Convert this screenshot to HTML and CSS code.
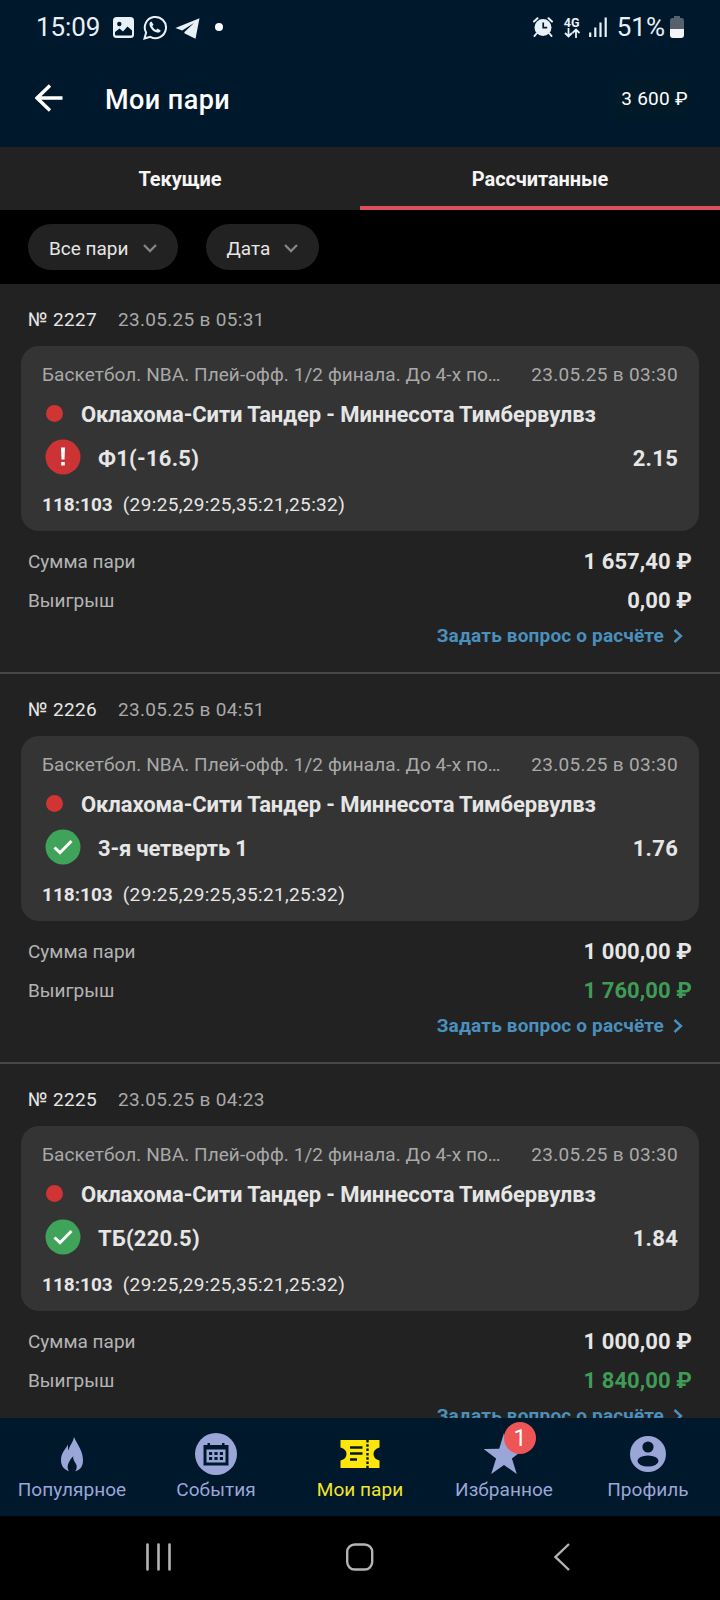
FILE: index.html
```html
<!DOCTYPE html>
<html lang="ru">
<head>
<meta charset="utf-8">
<title>Мои пари</title>
<link rel="stylesheet" href="styles.css">
</head>
<body>
<div class="app">
  <div class="statusbar">
    <span class="clock">15:09</span>
    <svg class="st-image" width="21" height="21" viewBox="0 0 21 21"><rect width="21" height="21" rx="3.5" fill="#e8f0f8"/><circle cx="6.3" cy="7" r="2.2" fill="#00182b"/><path d="M2 17.500v-2.500l4.500-3.500 3.500 3L14.500 9.500l4.500 4v4q0 1-1 1H3q-1 0-1-1z" fill="#00182b"/></svg>
    <svg class="st-whatsapp" width="24" height="25" viewBox="0 0 24 25"><path d="M1.500 23.500l1.600-5.900a10.600 10.600 0 1 1 4.200 4.200z" fill="none" stroke="#e8f0f8" stroke-width="2"/><path d="M8.500 6.500c-1.500.3-2.300 1.700-2 3.200.7 3.800 4.300 7.300 8 7.900 1.500.2 3-.7 3.200-2.200l-3.200-1.900-1.500 1.500c-1.800-.8-3-2.200-3.700-3.700l1.200-1.500z" fill="#e8f0f8"/></svg>
    <svg class="st-telegram" width="25" height="21" viewBox="0 0 25 21"><path d="M24.500.3L.4 10l6.800 2.400L19 5 9.500 14l-.2 1.200L20.500 20.700z" fill="#e8f0f8"/></svg>
    <span class="st-dot"></span>
    <span class="st-gap"></span>
    <svg class="st-alarm" width="20" height="20" viewBox="0 0 20 20"><g stroke="#e8f0f8" stroke-width="2" stroke-linecap="round"><path d="M1 4.500l3.500-3.300M19 4.500l-3.500-3.300M3.500 16.500L1.500 19M16.500 16.500l2 2.500"/></g><circle cx="10" cy="10.500" r="8.500" fill="#e8f0f8"/><path d="M10.200 5.500v5.200h4" fill="none" stroke="#00182b" stroke-width="1.700"/></svg>
    <span class="st-net"><span class="st-4g">4G</span><svg width="16" height="10" viewBox="0 0 16 10"><path d="M4.500 0v8.500M1 5l3.500 3.500L8 5M12 10V1.500M8.500 5L12 1.500 15.500 5" fill="none" stroke="#e8f0f8" stroke-width="1.800"/></svg></span>
    <svg class="st-signal" width="18" height="20" viewBox="0 0 18 20"><path d="M1.200 15.500V20M6.300 10.500V20M11.500 5.500V20M16.700.5V20" stroke="#e8f0f8" stroke-width="2.200"/></svg>
    <span class="percent">51%</span>
    <svg class="st-battery" width="14" height="22" viewBox="0 0 14 22"><path d="M4 0h6v2h2q2 0 2 2.500V13H0V4.500Q0 2 2 2h2z" fill="#56616e"/><path d="M0 13h14v6q0 3-3 3H3q-3 0-3-3z" fill="#f2f4f8"/></svg>
  </div>
  <header class="header">
    <svg class="back" width="28" height="28" viewBox="0 0 28 28"><path d="M27.500 14H2M15 1.500L2 14l13 12.500" fill="none" stroke="#fff" stroke-width="3.400"/></svg>
    <h1 class="title">Мои пари</h1>
    <span class="balance">3 600 ₽</span>
  </header>
  <nav class="tabs">
    <span class="tab">Текущие</span>
    <span class="tab tab-active">Рассчитанные</span>
  </nav>
  <div class="filters">
    <span class="chip">Все пари<svg width="14" height="9" viewBox="0 0 14 9"><path d="M1 1l6 6 6-6" fill="none" stroke="#858585" stroke-width="2.300"/></svg></span>
    <span class="chip">Дата<svg width="14" height="9" viewBox="0 0 14 9"><path d="M1 1l6 6 6-6" fill="none" stroke="#858585" stroke-width="2.300"/></svg></span>
  </div>
  <main class="bets">
    <article class="bet">
      <div class="bet-head"><span class="bet-no">№ 2227</span><span class="bet-date">23.05.25 в 05:31</span></div>
      <div class="card">
        <div class="event"><span class="league">Баскетбол. NBA. Плей-офф. 1/2 финала. До 4-х по…</span><span class="event-date">23.05.25 в 03:30</span></div>
        <div class="teams"><i class="sport"></i><span>Оклахома-Сити Тандер - Миннесота Тимбервулвз</span></div>
        <div class="pick"><svg width="36" height="36" viewBox="0 0 36 36"><circle cx="18" cy="18" r="17.500" fill="#cc3334"/><path d="M16 8.500h4l-.5 12h-3zM16.200 23h3.600v3.600h-3.600z" fill="#fff"/></svg><span class="code">Ф1(-16.5)</span><span class="odds">2.15</span></div>
        <div class="score"><b>118:103</b><span>(29:25,29:25,35:21,25:32)</span></div>
      </div>
      <div class="sum"><span>Сумма пари</span><b>1 657,40 ₽</b></div>
      <div class="sum"><span>Выигрыш</span><b>0,00 ₽</b></div>
      <div class="ask"><span>Задать вопрос о расчёте</span><svg width="10" height="14" viewBox="0 0 10 14"><path d="M1.500 1L8 7l-6.500 6" fill="none" stroke="#4a90be" stroke-width="2.400"/></svg></div>
    </article>
    <article class="bet">
      <div class="bet-head"><span class="bet-no">№ 2226</span><span class="bet-date">23.05.25 в 04:51</span></div>
      <div class="card">
        <div class="event"><span class="league">Баскетбол. NBA. Плей-офф. 1/2 финала. До 4-х по…</span><span class="event-date">23.05.25 в 03:30</span></div>
        <div class="teams"><i class="sport"></i><span>Оклахома-Сити Тандер - Миннесота Тимбервулвз</span></div>
        <div class="pick"><svg width="36" height="36" viewBox="0 0 36 36"><circle cx="18" cy="18" r="17.500" fill="#3fa35a"/><path d="M9.500 18.500l5.500 5.200L26.500 12" fill="none" stroke="#fff" stroke-width="3"/></svg><span>3-я четверть 1</span><span class="odds">1.76</span></div>
        <div class="score"><b>118:103</b><span>(29:25,29:25,35:21,25:32)</span></div>
      </div>
      <div class="sum"><span>Сумма пари</span><b>1 000,00 ₽</b></div>
      <div class="sum"><span>Выигрыш</span><b class="won">1 760,00 ₽</b></div>
      <div class="ask"><span>Задать вопрос о расчёте</span><svg width="10" height="14" viewBox="0 0 10 14"><path d="M1.500 1L8 7l-6.500 6" fill="none" stroke="#4a90be" stroke-width="2.400"/></svg></div>
    </article>
    <article class="bet">
      <div class="bet-head"><span class="bet-no">№ 2225</span><span class="bet-date">23.05.25 в 04:23</span></div>
      <div class="card">
        <div class="event"><span class="league">Баскетбол. NBA. Плей-офф. 1/2 финала. До 4-х по…</span><span class="event-date">23.05.25 в 03:30</span></div>
        <div class="teams"><i class="sport"></i><span>Оклахома-Сити Тандер - Миннесота Тимбервулвз</span></div>
        <div class="pick"><svg width="36" height="36" viewBox="0 0 36 36"><circle cx="18" cy="18" r="17.500" fill="#3fa35a"/><path d="M9.500 18.500l5.500 5.200L26.500 12" fill="none" stroke="#fff" stroke-width="3"/></svg><span class="code">ТБ(220.5)</span><span class="odds">1.84</span></div>
        <div class="score"><b>118:103</b><span>(29:25,29:25,35:21,25:32)</span></div>
      </div>
      <div class="sum"><span>Сумма пари</span><b>1 000,00 ₽</b></div>
      <div class="sum"><span>Выигрыш</span><b class="won">1 840,00 ₽</b></div>
      <div class="ask"><span>Задать вопрос о расчёте</span><svg width="10" height="14" viewBox="0 0 10 14"><path d="M1.500 1L8 7l-6.500 6" fill="none" stroke="#4a90be" stroke-width="2.400"/></svg></div>
    </article>
  </main>
  <nav class="bottom">
    <span class="item"><svg width="44" height="44" viewBox="0 0 44 44"><path d="M24 5c-1 6-5 9-5.200 13.500-.8-1-1-3.500-.8-6C15 18 11 21 11 28c0 6 3 9.500 8 11.200-3.500-5 .5-11 4.200-15-.5 5 3.500 6.500 3.500 10.500 0 2-.7 3.500-1.700 4.500 5-1 8-4.500 8-11 0-9-5-14.500-9-23.200z" fill="#9ba6d8"/></svg>Популярное</span>
    <span class="item"><svg width="44" height="44" viewBox="0 0 44 44"><circle cx="22" cy="22" r="21" fill="#9ba6d8"/><path d="M9.500 13h25v20.500h-25zM13.500 11H16v3h-2.500zM28 11h2.500v3H28z" fill="#00182b"/><path d="M12.500 17.500h19v13h-19z" fill="#9ba6d8"/><path d="M15 20h3.200v3H15zM20.400 20h3.200v3h-3.200zM25.800 20H29v3h-3.200zM15 25h3.200v3H15zM20.400 25h3.200v3h-3.200zM25.800 25H29v3h-3.200z" fill="#00182b"/></svg>События</span>
    <span class="item item-active"><svg width="44" height="44" viewBox="0 0 44 44"><path d="M2.500 8h39v7.500q-6 1.500-6 6.500t6 6.500V36h-39v-7.500q6-1.500 6-6.500t-6-6.500z" fill="#ffe60a"/><path d="M12 15.500h12.500M12 21.500h12.500M12 27.500h7" stroke="#00182b" stroke-width="2.400"/><path d="M29.500 8v28" stroke="#00182b" stroke-width="2.400" stroke-dasharray="2.500 1.800"/></svg>Мои пари</span>
    <span class="item"><svg width="44" height="44" viewBox="0 0 44 44"><path d="M22 1l4.800 15.700 15.400.3-12.300 9.600L34.800 42 22 33 9.200 42l4.900-15.400L1.600 17l15.600-.3z" fill="#9ba6d8"/></svg><span class="badge">1</span>Избранное</span>
    <span class="item"><svg width="44" height="44" viewBox="0 0 44 44"><circle cx="22" cy="22" r="18" fill="#9ba6d8"/><circle cx="22" cy="15" r="5.600" fill="#00182b"/><ellipse cx="22" cy="29" rx="10.500" ry="5.500" fill="#00182b"/></svg>Профиль</span>
  </nav>
  <div class="sysnav">
    <svg width="28" height="28" viewBox="0 0 28 28"><path d="M3.500 1.500v25M14.500 1.500v25M25.500 1.500v25" stroke="#b4b4b4" stroke-width="2.600" stroke-linecap="round"/></svg>
    <svg width="28" height="28" viewBox="0 0 28 28"><rect x="1.200" y="1.500" width="25" height="25" rx="7.500" fill="none" stroke="#b4b4b4" stroke-width="2.400"/></svg>
    <svg width="28" height="28" viewBox="0 0 28 28"><path d="M21 1L7.500 14 21 27" fill="none" stroke="#b4b4b4" stroke-width="2.400"/></svg>
  </div>
</div>
</body>
</html>
```
FILE: styles.css
```css
* { box-sizing: border-box; }
body { margin: 0; background: #000; font-family: Roboto, "Liberation Sans", sans-serif; font-size: 19px; color: #e6e6e6; }
svg { display: block; flex: none; }
.app { width: 720px; height: 1600px; display: flex; flex-direction: column; overflow: hidden; }
.statusbar { height: 54px; flex: none; background: #00182b; display: flex; align-items: center; padding: 0 36px 0 36px; color: #e8f0f8; font-size: 26px; line-height: 54px; }
.clock { width: 77px; letter-spacing: -0.1px; }
.st-whatsapp { margin-left: 9px; }
.st-telegram { margin-left: 8px; margin-top: 2px; }
.st-dot { width: 8px; height: 8px; border-radius: 50%; background: #fff; margin-left: 15px; }
.st-gap { flex: 1; }
.st-net { width: 17px; margin-left: 11px; display: flex; flex-direction: column; }
.st-4g { font-size: 12.5px; line-height: 11px; font-weight: 700; }
.st-signal { margin-left: 8px; }
.percent { margin-left: 10px; letter-spacing: 0; }
.st-battery { margin-left: 5px; }
.header { height: 93px; flex: none; background: #00182b; display: flex; align-items: center; padding: 0 32px 5px 35px; color: #fff; }
.title { margin: 0 0 0 42px; flex: 1; font-size: 27px; font-weight: 500; line-height: 40px; padding-top: 3px; letter-spacing: 0.45px; }
.balance { font-size: 19px; line-height: 38px; background: #021a28; padding: 1px 0 0 6px; letter-spacing: 0.3px; }
.tabs { height: 63px; flex: none; display: flex; background: #222; }
.tab { flex: 1; text-align: center; font-weight: 700; font-size: 20px; line-height: 64px; letter-spacing: -0.1px; color: #f5f5f5; }
.tab-active { border-bottom: 4px solid #d9525a; }
.filters { height: 74px; flex: none; display: flex; align-items: center; gap: 28px; padding: 0 28px; background: #000; }
.chip { height: 46px; display: flex; align-items: center; gap: 14px; padding: 2px 21px 0; border-radius: 23px; background: #222; font-size: 19px; }
.bets { height: 1134px; flex: none; overflow: hidden; background: #222; }
.bet { height: 390px; padding: 22px 21px 0; border-bottom: 2px solid #484848; }
.bet-head { display: flex; gap: 21px; padding-left: 7px; line-height: 27px; letter-spacing: 0.32px; }
.bet-date, .league, .event-date { color: #a9a9a9; }
.card { margin-top: 13px; height: 185px; padding: 14px 21px 0; border-radius: 18px; background: #343434; }
.event { display: flex; justify-content: space-between; line-height: 29px; white-space: nowrap; }
.league { letter-spacing: 0.07px; }
.event-date { letter-spacing: 0.32px; }
.teams { display: flex; align-items: center; margin-top: 5px; height: 41px; font-size: 22px; font-weight: 700; letter-spacing: -0.1px; white-space: nowrap; }
.sport { width: 17px; height: 17px; margin: -2px 18px 0 4px; border-radius: 50%; background: #d03433; flex: none; }
.pick { display: flex; align-items: center; height: 47px; padding-left: 3px; gap: 17px; font-size: 22px; font-weight: 700; letter-spacing: -0.15px; }
.pick svg { margin-top: -3px; }
.code { letter-spacing: 0.25px; }
.odds { margin-left: auto; letter-spacing: 0.25px; }
.score { display: flex; gap: 10px; margin-top: 8px; line-height: 29px; }
.score span { letter-spacing: 0.35px; }
.sum { display: flex; justify-content: space-between; align-items: flex-start; padding: 0 7px; height: 39px; line-height: 39px; color: #b4b4b4; }
.card + .sum { margin-top: 11px; }
.sum b { font-size: 22px; letter-spacing: 0.1px; color: #e6e6e6; }
.sum .won { color: #3f9c57; }
.ask { display: flex; justify-content: flex-end; align-items: center; gap: 9px; padding-right: 16px; height: 31px; font-weight: 700; letter-spacing: 0.17px; color: #4a90be; }
.bottom { height: 98px; flex: none; display: flex; background: #00182b; color: #9ba6d8; }
.item { position: relative; flex: 1; display: flex; flex-direction: column; align-items: center; padding-top: 14px; gap: 1px; line-height: 26px; letter-spacing: 0.06px; }
.item-active { color: #f5e52c; }
.badge { position: absolute; left: 72px; top: 4px; width: 32px; height: 32px; border-radius: 50%; background: #ee5555; color: #fff; font-size: 23px; line-height: 33px; text-align: center; }
.sysnav { height: 84px; flex: none; display: flex; align-items: center; justify-content: space-between; padding: 0 144px 2px; background: #000; }
```
